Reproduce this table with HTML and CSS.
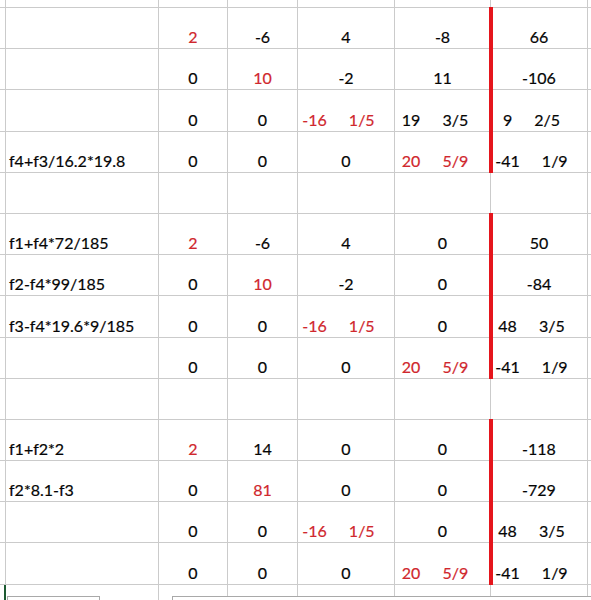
FILE: index.html
```html
<!DOCTYPE html>
<html>
<head>
<meta charset="utf-8">
<link rel="stylesheet" href="styles.css">
</head>
<body>
<div class="sheet">
<table class="grid">
<colgroup>
<col class="c0"><col class="ca"><col class="cb"><col class="cc"><col class="cd"><col class="ce"><col class="cf"><col class="cg">
</colgroup>
<tr class="top"><td></td><td></td><td></td><td></td><td></td><td></td><td></td><td></td></tr>

<tr><td></td><td class="lbl"></td><td class="red">2</td><td>-6</td><td>4</td><td>-8</td><td class="bar">66</td><td></td></tr>
<tr><td></td><td class="lbl"></td><td>0</td><td class="red">10</td><td>-2</td><td>11</td><td class="bar">-106</td><td></td></tr>
<tr><td></td><td class="lbl"></td><td>0</td><td>0</td><td><span class="fr red"><span>-16</span><span>1/5</span></span></td><td><span class="fr"><span>19</span><span>3/5</span></span></td><td class="bar"><span class="fr"><span>9</span><span>2/5</span></span></td><td></td></tr>
<tr><td></td><td class="lbl">f4+f3/16.2*19.8</td><td>0</td><td>0</td><td>0</td><td><span class="fr red"><span>20</span><span>5/9</span></span></td><td class="bar"><span class="fr"><span>-41</span><span>1/9</span></span></td><td></td></tr>
<tr><td></td><td class="lbl"></td><td></td><td></td><td></td><td></td><td></td><td></td></tr>

<tr><td></td><td class="lbl">f1+f4*72/185</td><td class="red">2</td><td>-6</td><td>4</td><td>0</td><td class="bar">50</td><td></td></tr>
<tr><td></td><td class="lbl">f2-f4*99/185</td><td>0</td><td class="red">10</td><td>-2</td><td>0</td><td class="bar">-84</td><td></td></tr>
<tr><td></td><td class="lbl">f3-f4*19.6*9/185</td><td>0</td><td>0</td><td><span class="fr red"><span>-16</span><span>1/5</span></span></td><td>0</td><td class="bar"><span class="fr"><span>48</span><span>3/5</span></span></td><td></td></tr>
<tr><td></td><td class="lbl"></td><td>0</td><td>0</td><td>0</td><td><span class="fr red"><span>20</span><span>5/9</span></span></td><td class="bar"><span class="fr"><span>-41</span><span>1/9</span></span></td><td></td></tr>
<tr><td></td><td class="lbl"></td><td></td><td></td><td></td><td></td><td></td><td></td></tr>

<tr><td></td><td class="lbl">f1+f2*2</td><td class="red">2</td><td>14</td><td>0</td><td>0</td><td class="bar">-118</td><td></td></tr>
<tr><td></td><td class="lbl">f2*8.1-f3</td><td>0</td><td class="red">81</td><td>0</td><td>0</td><td class="bar">-729</td><td></td></tr>
<tr><td></td><td class="lbl"></td><td>0</td><td>0</td><td><span class="fr red"><span>-16</span><span>1/5</span></span></td><td>0</td><td class="bar"><span class="fr"><span>48</span><span>3/5</span></span></td><td></td></tr>
<tr><td></td><td class="lbl"></td><td>0</td><td>0</td><td>0</td><td><span class="fr red"><span>20</span><span>5/9</span></span></td><td class="bar"><span class="fr"><span>-41</span><span>1/9</span></span></td><td></td></tr>

<tr class="last"><td class="sel"></td><td></td><td></td><td></td><td></td><td></td><td></td><td></td></tr>
</table>
<div class="tabs">
<div class="tab t1"></div>
<div class="tab t2"></div>
</div>
</div>
</body>
</html>
```
FILE: styles.css
```css
html, body {
  margin: 0;
  padding: 0;
  background: #fff;
}
body {
  width: 591px;
  height: 600px;
  overflow: hidden;
  font-family: Lato, "Liberation Sans", sans-serif;
  font-size: 16px;
  color: #050505;
  -webkit-text-stroke: 0.2px currentColor;
}
.sheet {
  position: relative;
  width: 591px;
  height: 600px;
  overflow: hidden;
}
.grid {
  table-layout: fixed;
  border-collapse: separate;
  border-spacing: 0;
  width: 618px;
}
.c0 { width: 6px; }
.ca { width: 153px; }
.cb { width: 69px; }
.cc { width: 70px; }
.cd { width: 97px; }
.ce { width: 96px; }
.cf { width: 97px; }
.cg { width: 30px; }

.grid td {
  box-sizing: border-box;
  height: 41.2px;
  padding: 0 0 2px 0;
  border-right: 1px solid #cbcbcb;
  border-bottom: 1px solid #cbcbcb;
  text-align: center;
  vertical-align: bottom;
  line-height: 19px;
  white-space: nowrap;
  overflow: visible;
}
.grid tr.top td {
  height: 8px;
  padding: 0;
}
.grid tr.last td {
  height: 15px;
  padding: 0;
  border-bottom: none;
}
.grid td.sel {
  border-right: 2px solid #1d5a32;
}
.grid td.lbl {
  text-align: left;
  padding-left: 3px;
}
.red {
  color: #d0272d;
}
.fr {
  display: inline-flex;
  gap: 22px;
  padding-right: 15px;
}
.grid td.bar {
  position: relative;
}
.grid td.bar::before {
  content: "";
  position: absolute;
  left: -2px;
  top: -1px;
  bottom: -1px;
  width: 4px;
  background: #e5151c;
}
.tabs {
  position: absolute;
  left: 0;
  right: 0;
  top: 595px;
  height: 10px;
}
.tab {
  position: absolute;
  top: 1px;
  height: 20px;
  background: #fff;
  border: 1px solid #a9a9a9;
  box-sizing: border-box;
}
.t1 {
  left: 7px;
  width: 93px;
}
.t2 {
  left: 172px;
  right: -10px;
}
```
